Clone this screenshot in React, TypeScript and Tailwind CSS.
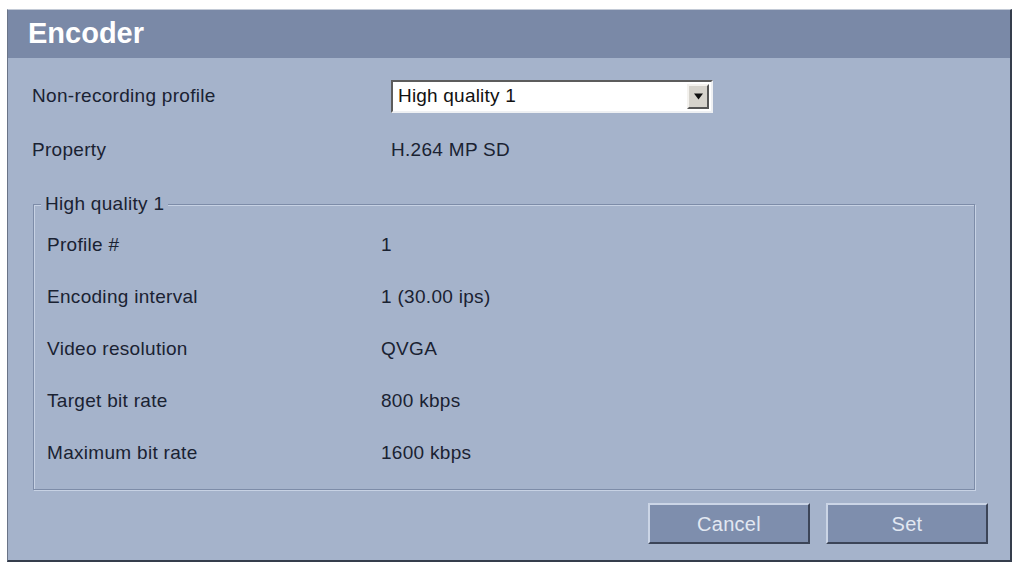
import React from "react"

const font = { fontFamily: '"Liberation Sans", Arial, sans-serif' }

const details: [string, string][] = [
  ["Profile #", "1"],
  ["Encoding interval", "1 (30.00 ips)"],
  ["Video resolution", "QVGA"],
  ["Target bit rate", "800 kbps"],
  ["Maximum bit rate", "1600 kbps"],
]

function Combo({ value }: { value: string }) {
  return (
    <div className="flex h-[33px] w-[322px] border-2 border-t-[#5c5c5c] border-l-[#5c5c5c] border-b-[#eef0f3] border-r-[#eef0f3] bg-white">
      <div className="flex flex-1 items-center pl-[5px] text-[19px] tracking-[0.2px] text-[#111]">{value}</div>
      <div className="m-[2px] flex w-[22px] items-center justify-center border-2 border-t-[#f4f2ee] border-l-[#f4f2ee] border-b-[#555] border-r-[#555] bg-[#d6d3cc]">
        <svg width="11" height="7" viewBox="0 0 11 7">
          <path d="M1 0.5h9L5.5 6.5z" fill="#111" />
        </svg>
      </div>
    </div>
  )
}

function PanelButton({ label }: { label: string }) {
  return (
    <button className="h-[41px] w-[162px] border-2 border-t-[#cbd5e6] border-l-[#cbd5e6] border-b-[#3c4558] border-r-[#3c4558] bg-[#7e8ead] text-[20px] text-[#e2e8f2]">
      {label}
    </button>
  )
}

export default function App() {
  return (
    <div className="h-[567px] w-full bg-white pt-[9px] pl-[7px] pr-[3px]" style={font}>
      <div className="flex h-[553px] flex-col border-t border-l border-t-[#c3cad6] border-l-[#6a7487] border-r-2 border-b-2 border-r-[#353d4c] border-b-[#353d4c] bg-[#a5b3cb] text-[#1a2232]">
        <div className="flex h-[48px] items-center bg-[#7a89a7] pl-[20px]">
          <h1 className="text-[29px] font-bold text-white">Encoder</h1>
        </div>

        <div className="flex flex-1 flex-col text-[19px] tracking-[0.3px]">
          <div className="mt-[22px] flex h-[33px] items-center pl-[24px]">
            <span className="w-[359px]">Non-recording profile</span>
            <Combo value="High quality 1" />
          </div>

          <div className="mt-[22px] flex h-[30px] items-center pl-[24px]">
            <span className="w-[359px]">Property</span>
            <span>H.264 MP SD</span>
          </div>

          <div className="relative mt-[39px] ml-[25px] mr-[35px] border border-[#7d8ca8] pt-[14px] pb-[10px] pl-[13px] shadow-[inset_1px_1px_0_#c7d2e4,1px_1px_0_#c7d2e4]">
            <span className="absolute -top-[12px] left-[7px] bg-[#a5b3cb] px-[4px] leading-[22px]">
              High quality 1
            </span>
            {details.map(([label, value]) => (
              <div key={label} className="flex h-[52px] items-center">
                <span className="w-[334px]">{label}</span>
                <span>{value}</span>
              </div>
            ))}
          </div>

          <div className="mt-[13px] flex justify-end gap-[16px] pr-[22px]">
            <PanelButton label="Cancel" />
            <PanelButton label="Set" />
          </div>
        </div>
      </div>
    </div>
  )
}
